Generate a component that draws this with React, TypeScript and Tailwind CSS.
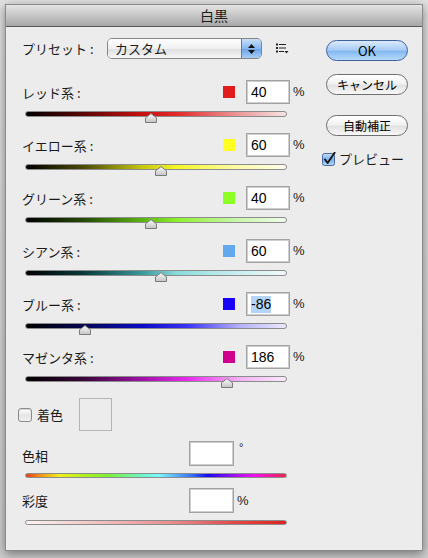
import React from 'react';

type Channel = {
  label: string;
  value: number;
  swatch: string;
  track: string;
  selected?: boolean;
};

const channels: Channel[] = [
  {
    label: 'レッド系 :',
    value: 40,
    swatch: 'bg-[#e01c1c]',
    track: 'bg-[linear-gradient(to_right,#000_0%,#5a0606_22%,#c81010_45%,#e32a2a_58%,#eb9090_80%,#f6e4e4_100%)]',
  },
  {
    label: 'イエロー系 :',
    value: 60,
    swatch: 'bg-[#ffff24]',
    track: 'bg-[linear-gradient(to_right,#000_0%,#4a4a06_22%,#c8c810_45%,#f6f628_58%,#fbfba0_80%,#fdfdf0_100%)]',
  },
  {
    label: 'グリーン系 :',
    value: 40,
    swatch: 'bg-[#8cff26]',
    track: 'bg-[linear-gradient(to_right,#000_0%,#244a06_22%,#5cb410_45%,#8ef02c_58%,#c6f6a6_80%,#f0fbea_100%)]',
  },
  {
    label: 'シアン系 :',
    value: 60,
    swatch: 'bg-[#62a8ee]',
    track: 'bg-[linear-gradient(to_right,#000_0%,#0a3a3a_22%,#3a9a9a_45%,#8adcdc_58%,#c6eeee_80%,#f0fafa_100%)]',
  },
  {
    label: 'ブルー系 :',
    value: -86,
    swatch: 'bg-[#1800ff]',
    track: 'bg-[linear-gradient(to_right,#000_0%,#060650_22%,#0c0cc8_45%,#3a30f4_62%,#b4b0f8_82%,#eceafc_100%)]',
    selected: true,
  },
  {
    label: 'マゼンタ系 :',
    value: 186,
    swatch: 'bg-[#d0008c]',
    track: 'bg-[linear-gradient(to_right,#000_0%,#3a063a_22%,#a010a8_45%,#e82aee_62%,#f2b0f4_82%,#fbeafc_100%)]',
  },
];

const jp = "font-['Lucida_Grande','Noto_Sans_CJK_JP',sans-serif]";

function Thumb() {
  return (
    <svg width="12" height="10" viewBox="0 0 12 10">
      <defs>
        <linearGradient id="thumbFill" x1="0" y1="0" x2="0" y2="1">
          <stop offset="0" stopColor="#fafafa" />
          <stop offset="1" stopColor="#c4c4c4" />
        </linearGradient>
      </defs>
      <path d="M0.5 9.5 L0.5 4.8 L6 0.6 L11.5 4.8 L11.5 9.5 Z" fill="url(#thumbFill)" stroke="#7a7a7a" strokeWidth="1" />
    </svg>
  );
}

function Track({ gradient, value, thin }: { gradient: string; value?: number; thin?: boolean }) {
  const pct = value === undefined ? 0 : ((value + 200) / 500) * 100;
  return (
    <div className={`relative ml-[3px] w-[262px] ${thin ? 'h-[5px]' : 'h-[6px]'}`}>
      <div className={`h-full w-full rounded-full border border-[#8c8c8c] ${gradient}`} />
      {value !== undefined && (
        <div className="absolute top-[2px] -ml-[6px] flex" style={{ left: `${pct}%` }}>
          <Thumb />
        </div>
      )}
    </div>
  );
}

function NumBox({ children, wide }: { children?: React.ReactNode; wide?: boolean }) {
  return (
    <div
      className={`flex items-center border border-[#a2a2a2] bg-white pl-[4px] shadow-[inset_0_0_0_1px_#cfcfcf] ${
        wide ? 'h-[25px] w-[45px]' : 'h-[24px] w-[44px]'
      }`}
    >
      {children}
    </div>
  );
}

function Checkbox({ checked }: { checked?: boolean }) {
  if (checked) {
    return (
      <svg width="14" height="14" viewBox="0 0 14 14">
        <defs>
          <linearGradient id="cbBlue" x1="0" y1="0" x2="0" y2="1">
            <stop offset="0" stopColor="#c6defa" />
            <stop offset="0.5" stopColor="#7fb0ea" />
            <stop offset="1" stopColor="#b4d6fb" />
          </linearGradient>
        </defs>
        <rect x="0.5" y="1.5" width="12" height="12" rx="2" fill="url(#cbBlue)" stroke="#4a6aa0" />
        <path d="M3 7.5 L5.6 11 L12.6 0.8" fill="none" stroke="#1a1a1a" strokeWidth="2" strokeLinecap="round" strokeLinejoin="round" />
      </svg>
    );
  }
  return (
    <div className="h-[14px] w-[14px] rounded-[3px] border border-[#8a8a8a] bg-[linear-gradient(to_bottom,#ffffff,#e4e4e4_55%,#f2f2f2)] shadow-[inset_0_1px_1px_rgba(0,0,0,0.15)]" />
  );
}

function AquaButton({ label, primary }: { label: string; primary?: boolean }) {
  return (
    <div
      className={`flex h-[21px] w-[82px] items-center justify-center rounded-full border text-black ${jp} ${
        primary
          ? 'border-[#40609e] bg-[linear-gradient(to_bottom,#dcebfc_0%,#a9cdf6_45%,#86b9f0_55%,#b5dafc_100%)] text-[13px]'
          : 'border-[#6e6e6e] bg-[linear-gradient(to_bottom,#ffffff_0%,#f2f2f2_45%,#e2e2e2_55%,#f8f8f8_100%)] text-[12px]'
      }`}
    >
      {label}
    </div>
  );
}

function ListIcon() {
  return (
    <svg width="13" height="11" viewBox="0 0 13 11">
      <rect x="0" y="0.5" width="2" height="2" fill="#222" />
      <rect x="3" y="1" width="7" height="1" fill="#222" />
      <rect x="0" y="4" width="2" height="2" fill="#222" />
      <rect x="3" y="4.5" width="7" height="1" fill="#222" />
      <rect x="0" y="7.5" width="2" height="2" fill="#222" />
      <rect x="3" y="8" width="5" height="1" fill="#222" />
      <path d="M8.5 8 L12.5 8 L10.5 10.5 Z" fill="#222" />
    </svg>
  );
}

export default function App() {
  return (
    <div className="h-[558px] w-[428px] overflow-hidden bg-[linear-gradient(to_bottom,#e2e2e2,#cfcfcf)] pl-[5px] pt-[4px]">
      <div className="flex h-[547px] w-[418px] flex-col border border-[#8a8a8a] shadow-[0_3px_10px_rgba(0,0,0,0.45)]">
        {/* title */}
        <div
          className={`flex h-[22px] items-center justify-center border-b border-[#5a5a5a] bg-[linear-gradient(to_bottom,#e4e4e4,#a8a8a8)] text-[14px] text-[#1a1a1a] ${jp}`}
        >
          白黒
        </div>

        <div className={`flex flex-1 bg-[#ececec] text-[13px] text-[#1a1a1a] ${jp}`}>
          {/* left column */}
          <div className="flex w-[316px] flex-col pl-[16px] pt-[11px]">
            <div className="flex h-[21px] items-center">
              <span className="w-[85px]">プリセット :</span>
              <div className="flex h-[21px] w-[155px] overflow-hidden rounded-[5px] border border-[#858585]">
                <div className="flex flex-1 items-center bg-[linear-gradient(to_bottom,#ffffff,#f0f0f0_50%,#e0e0e0_55%,#f6f6f6)] pl-[7px]">
                  カスタム
                </div>
                <div className="flex w-[20px] flex-col items-center justify-center gap-[2px] border-l border-[#5b7ab0] bg-[linear-gradient(to_bottom,#c8defa,#8ab8ee_50%,#6ea4e6_55%,#a6cef8)]">
                  <svg width="7" height="4" viewBox="0 0 7 4">
                    <path d="M0 4 L3.5 0 L7 4 Z" fill="#111" />
                  </svg>
                  <svg width="7" height="4" viewBox="0 0 7 4">
                    <path d="M0 0 L7 0 L3.5 4 Z" fill="#111" />
                  </svg>
                </div>
              </div>
              <div className="ml-[14px] flex">
                <ListIcon />
              </div>
            </div>

            <div className="mt-[21px] flex flex-col">
              {channels.map((c) => (
                <div key={c.label} className="mb-[16px] flex flex-col">
                  <div className="flex h-[24px] w-[283px] items-center">
                    <span className="flex-1 pt-[2px]">{c.label}</span>
                    <div className={`mr-[11px] h-[12px] w-[12px] ${c.swatch}`} />
                    <NumBox>
                      <span
                        className={`font-['Liberation_Sans',sans-serif] text-[14px] leading-[17px] text-black ${
                          c.selected ? 'bg-[#b4d4fc]' : ''
                        }`}
                      >
                        {c.value}
                      </span>
                    </NumBox>
                    <span className="ml-[3px] w-[12px] font-['Liberation_Sans',sans-serif] text-[13px]">%</span>
                  </div>
                  <div className="mt-[7px]">
                    <Track gradient={c.track} value={c.value} />
                  </div>
                </div>
              ))}
            </div>

            {/* colorize */}
            <div className="flex h-[33px] items-center">
              <div className="-ml-[4px] flex">
                <Checkbox />
              </div>
              <span className="ml-[5px] w-[42px]">着色</span>
              <div className="h-[33px] w-[33px] border border-[#b4b4b4]" />
            </div>

            <div className="mt-[10px] flex items-start">
              <span className="mt-[5px] w-[167px]">色相</span>
              <NumBox wide />
              <span className="ml-[5px] font-['Liberation_Sans',sans-serif] text-[11px] leading-[12px]">°</span>
            </div>
            <div className="mt-[7px]">
              <Track
                thin
                gradient="bg-[linear-gradient(to_right,#e83a1c_0%,#f39a18_6%,#f0ee1a_13%,#a6f020_24%,#7af23a_32%,#6cf7cc_45%,#7ef6ff_51%,#3a7af6_63%,#1808f4_70%,#9c10f2_80%,#f212ea_88%,#f01aa0_94%,#e8284a_100%)]"
              />
            </div>
            <div className="mt-[10px] flex items-center">
              <span className="w-[167px]">彩度</span>
              <NumBox wide />
              <span className="ml-[3px] font-['Liberation_Sans',sans-serif] text-[13px]">%</span>
            </div>
            <div className="mt-[7px]">
              <Track
                thin
                gradient="bg-[linear-gradient(to_right,#fbf4f4_0%,#f2c6c6_25%,#e89090_55%,#e24a4a_80%,#de2222_100%)]"
              />
            </div>
          </div>

          {/* right column */}
          <div className="flex flex-col pt-[13px]">
            <div className="ml-[4px] flex flex-col">
              <AquaButton label="OK" primary />
              <div className="mt-[13px]">
                <AquaButton label="キャンセル" />
              </div>
              <div className="mt-[20px]">
                <AquaButton label="自動補正" />
              </div>
            </div>
            <div className="mt-[13px] flex items-center">
              <Checkbox checked />
              <span className="ml-[3px]">プレビュー</span>
            </div>
          </div>
        </div>
      </div>
    </div>
  );
}
